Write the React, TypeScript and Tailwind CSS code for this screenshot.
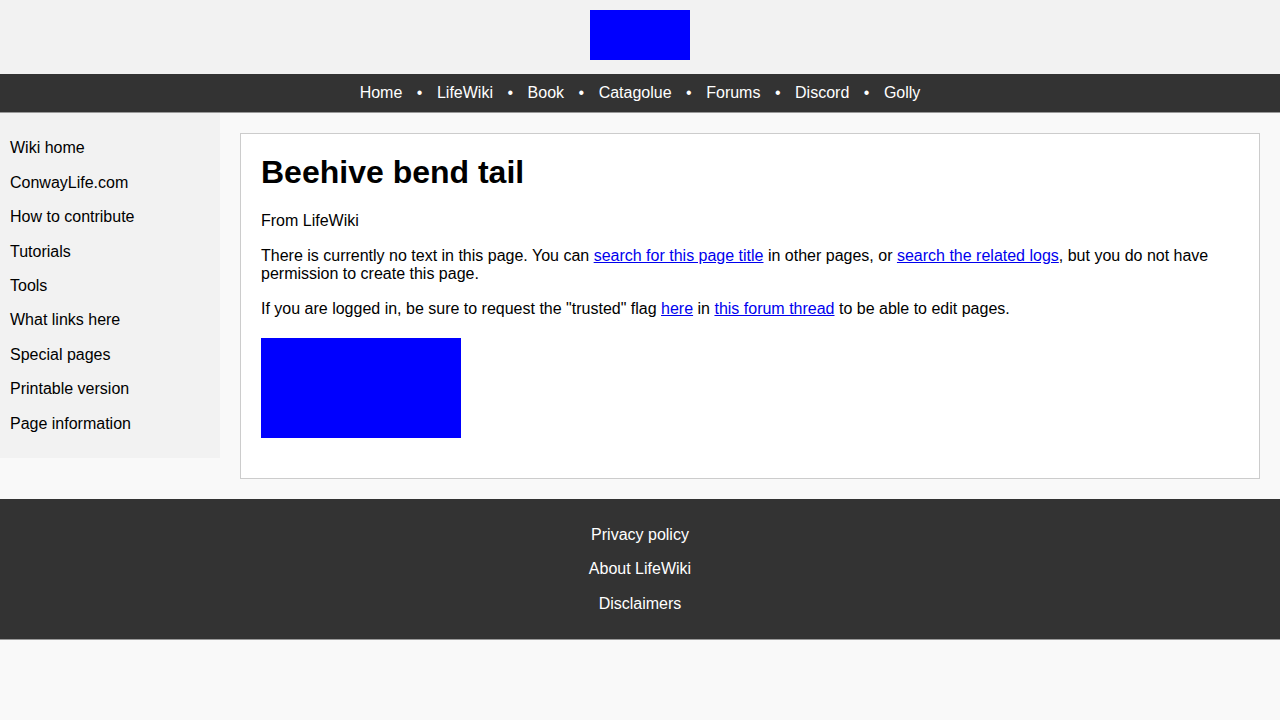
const navItems = ['Home', 'LifeWiki', 'Book', 'Catagolue', 'Forums', 'Discord', 'Golly'];

const sideItems = [
  'Wiki home',
  'ConwayLife.com',
  'How to contribute',
  'Tutorials',
  'Tools',
  'What links here',
  'Special pages',
  'Printable version',
  'Page information',
];

const footerItems = ['Privacy policy', 'About LifeWiki', 'Disclaimers'];

function A({ children }: { children: React.ReactNode }) {
  return (
    <a href="#" className="text-[#0000ee] underline">
      {children}
    </a>
  );
}

export default function App() {
  return (
    <div className="min-h-[720px] bg-[#f9f9f9] font-['Liberation_Sans',Arial,sans-serif] text-[16px] leading-[18.4px] text-black">
      <header className="flex h-[74px] justify-center bg-[#f2f2f2] pt-[10px]">
        <div className="h-[50px] w-[100px] bg-[#0000ff]" />
      </header>

      <nav className="flex justify-center border-b border-[#999] bg-[#333] py-[10px] text-white">
        {navItems.map((item, i) => (
          <span key={item} className="flex">
            {i > 0 && <span className="mx-[14.5px]">•</span>}
            <a href="#">{item}</a>
          </span>
        ))}
      </nav>

      <div className="flex items-start">
        <aside className="w-[220px] shrink-0 bg-[#f2f2f2] pb-[17px] pt-[18px]">
          {sideItems.map((item) => (
            <a key={item} href="#" className="block px-[10px] py-[8px]">
              {item}
            </a>
          ))}
        </aside>

        <main className="m-[20px] min-w-0 flex-1 border border-[#ccc] bg-white p-[20px]">
          <h1 className="mb-[21px] text-[32px] font-bold leading-[37px]">Beehive bend tail</h1>
          <div>From LifeWiki</div>
          <p className="mt-[16px]">
            There is currently no text in this page. You can <A>search for this page title</A> in other
            pages, or <A>search the related logs</A>, but you do not have permission to create this page.
          </p>
          <p className="mt-[16px]">
            If you are logged in, be sure to request the "trusted" flag <A>here</A> in{' '}
            <A>this forum thread</A> to be able to edit pages.
          </p>
          <div className="mb-[20px] mt-[20px] h-[100px] w-[200px] bg-[#0000ff]" />
        </main>
      </div>

      <footer className="border-b border-[#999] bg-[#333] pb-[18px] pt-[19px] text-center text-white">
        {footerItems.map((item) => (
          <a key={item} href="#" className="block py-[8px]">
            {item}
          </a>
        ))}
      </footer>
    </div>
  );
}
